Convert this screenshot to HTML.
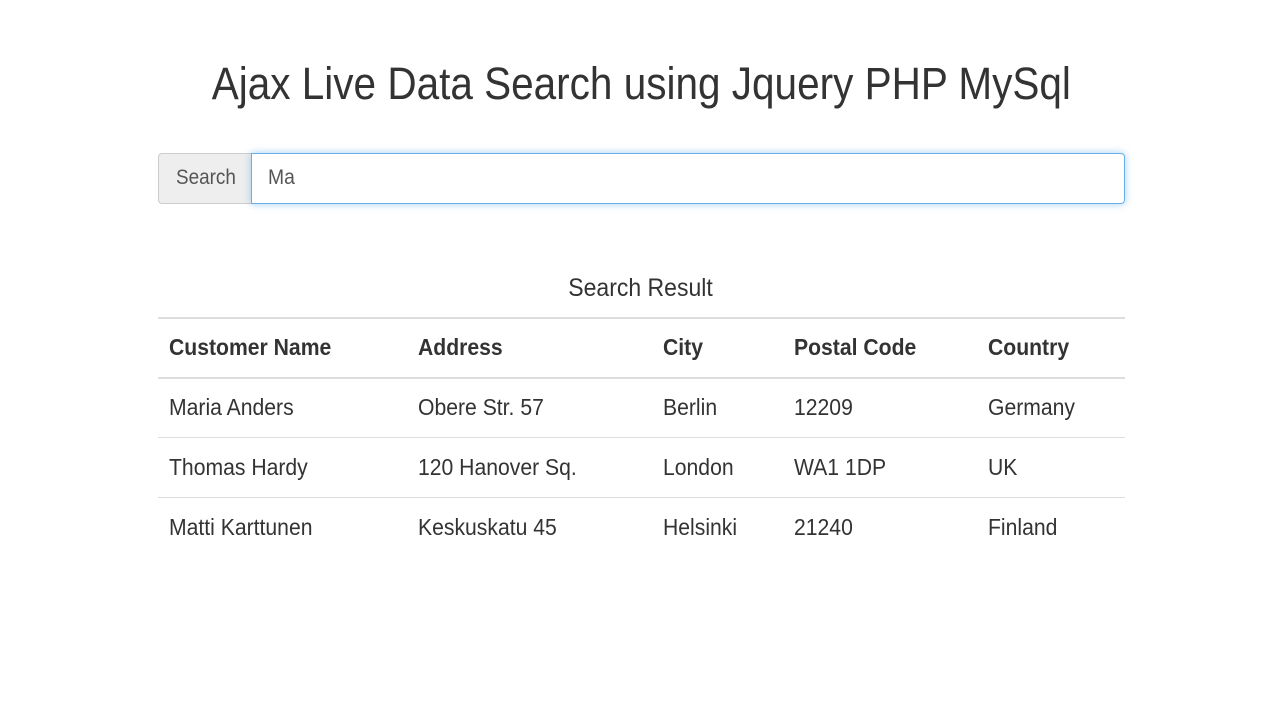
<!DOCTYPE html>
<html><head><meta charset="utf-8"><style>
body{margin:0;width:1280px;height:720px;background:#fff;font-family:"Liberation Sans",sans-serif;color:#333;position:relative;overflow:hidden}
.t{position:absolute;white-space:nowrap;transform:scaleX(0.92);transform-origin:left top}
.line{position:absolute;left:158px;width:967px;height:1px;background:#ddd}
.c{font-size:23px;line-height:26px}
.b{font-weight:bold}
</style></head><body>
<div style="position:absolute;left:0;width:1282px;top:58px;text-align:center;font-size:45px;line-height:52px;color:#333"><span style="display:inline-block;transform:scaleX(0.9)">Ajax Live Data Search using Jquery PHP MySql</span></div>
<div style="position:absolute;left:158px;top:153px;width:92px;height:49px;background:#eee;border:1px solid #ccc;border-radius:4px 0 0 4px"></div>
<div class="t" style="left:176px;top:166px;font-size:21px;color:#555;transform:scaleX(0.9)">Search</div>
<div style="position:absolute;left:251px;top:153px;width:872px;height:49px;border:1px solid #66afe9;border-radius:0 4px 4px 0;box-shadow:0 0 8px rgba(102,175,233,.6)"></div>
<div class="t" style="left:268px;top:166px;font-size:21px;color:#555">Ma</div>
<div style="position:absolute;left:0;width:1282px;top:274px;text-align:center;font-size:25px;line-height:28px"><span style="display:inline-block;transform:scaleX(0.92)">Search Result</span></div>
<div class="line" style="top:317px;height:2px"></div>
<div class="t c b" style="left:169px;top:334px">Customer Name</div>
<div class="t c b" style="left:418px;top:334px">Address</div>
<div class="t c b" style="left:663px;top:334px">City</div>
<div class="t c b" style="left:794px;top:334px">Postal Code</div>
<div class="t c b" style="left:988px;top:334px">Country</div>
<div class="line" style="top:377px;height:2px"></div>
<div class="t c" style="left:169px;top:394px">Maria Anders</div>
<div class="t c" style="left:418px;top:394px">Obere Str. 57</div>
<div class="t c" style="left:663px;top:394px">Berlin</div>
<div class="t c" style="left:794px;top:394px">12209</div>
<div class="t c" style="left:988px;top:394px">Germany</div>
<div class="line" style="top:437px"></div>
<div class="t c" style="left:169px;top:454px">Thomas Hardy</div>
<div class="t c" style="left:418px;top:454px">120 Hanover Sq.</div>
<div class="t c" style="left:663px;top:454px">London</div>
<div class="t c" style="left:794px;top:454px">WA1 1DP</div>
<div class="t c" style="left:988px;top:454px">UK</div>
<div class="line" style="top:497px"></div>
<div class="t c" style="left:169px;top:514px">Matti Karttunen</div>
<div class="t c" style="left:418px;top:514px">Keskuskatu 45</div>
<div class="t c" style="left:663px;top:514px">Helsinki</div>
<div class="t c" style="left:794px;top:514px">21240</div>
<div class="t c" style="left:988px;top:514px">Finland</div>
</body></html>
